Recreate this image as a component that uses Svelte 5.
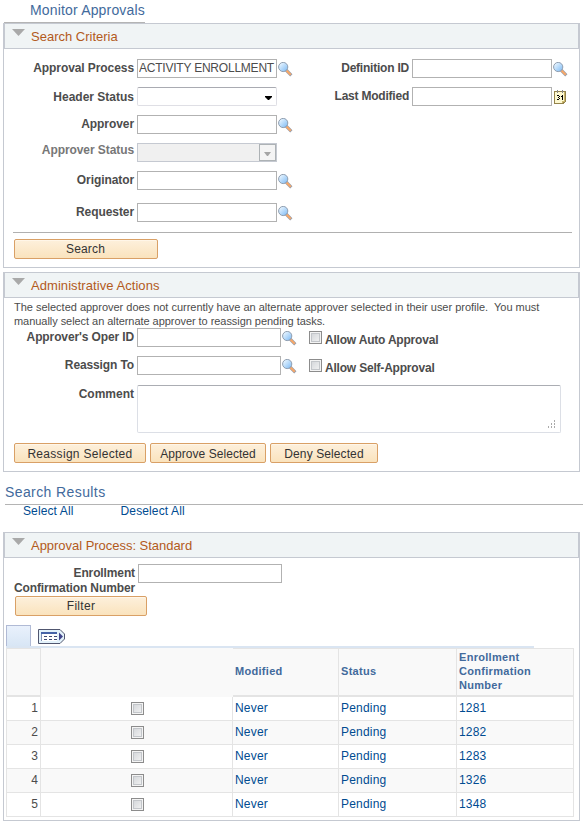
<script lang="ts">
    const searchFields = [
        { label: 'Approval Process', type: 'lookup', value: 'ACTIVITY ENROLLMENT' },
        { label: 'Header Status', type: 'select', value: '' },
        { label: 'Approver', type: 'lookup', value: '' },
        { label: 'Approver Status', type: 'disabled', value: '' },
        { label: 'Originator', type: 'lookup', value: '' },
        { label: 'Requester', type: 'lookup', value: '' }
    ];

    const actions = [
        { label: "Approver's Oper ID", option: 'Allow Auto Approval' },
        { label: 'Reassign To', option: 'Allow Self-Approval' }
    ];

    const rows = [
        { modified: 'Never', status: 'Pending', confirmation: 1281 },
        { modified: 'Never', status: 'Pending', confirmation: 1282 },
        { modified: 'Never', status: 'Pending', confirmation: 1283 },
        { modified: 'Never', status: 'Pending', confirmation: 1326 },
        { modified: 'Never', status: 'Pending', confirmation: 1348 }
    ];
</script>

{#snippet lookup()}
    <svg class="lookup" width="15" height="15" viewBox="0 0 15 15">
        <defs>
            <linearGradient id="lens" x1="0" y1="0" x2="1" y2="1">
                <stop offset="0.1" stop-color="#ecf7ff" />
                <stop offset="0.9" stop-color="#86bff5" />
            </linearGradient>
        </defs>
        <path d="M9 9L12.2 12.2" stroke="#979fae" stroke-width="3.2" stroke-linecap="square" />
        <path d="M9.2 9.2L12 12" stroke="#f8a868" stroke-width="2.1" stroke-linecap="square" />
        <circle cx="5.2" cy="5" r="4.6" fill="url(#lens)" stroke="#8f9eb0" />
    </svg>
{/snippet}

{#snippet header(title: string)}
    <div class="panel-header">
        <svg width="13" height="7" viewBox="0 0 13 7"><path d="M0 0H13L6.5 7Z" fill="#a9a9a9" /></svg>
        <h2>{title}</h2>
    </div>
{/snippet}

<main>
    <h1>Monitor Approvals</h1>

    <section class="panel search-panel">
        {@render header('Search Criteria')}
        <div class="criteria">
            <div class="column">
                {#each searchFields as field}
                    <div class="field" class:muted={field.type === 'disabled'} class:status-field={field.type === 'select'}>
                        <span class="label">{field.label}</span>
                        {#if field.type === 'lookup'}
                            <input type="text" aria-label={field.label} value={field.value} />
                            {@render lookup()}
                        {:else if field.type === 'select'}
                            <div class="select">
                                <svg width="7" height="4" viewBox="0 0 7 4"><path d="M0 0H7V1L4 4H3L0 1Z" fill="#000" /></svg>
                            </div>
                        {:else}
                            <div class="select disabled">
                                <span><svg width="7" height="4" viewBox="0 0 7 4"><path d="M0 0H7L4 4H3Z" fill="#a5a5a5" /></svg></span>
                            </div>
                        {/if}
                    </div>
                {/each}
            </div>
            <div class="column right">
                <div class="field">
                    <span class="label">Definition ID</span>
                    <input type="text" aria-label="Definition ID" />
                    {@render lookup()}
                </div>
                <div class="field last-modified">
                    <span class="label">Last Modified</span>
                    <input type="text" aria-label="Last Modified" />
                    <svg class="calendar" width="12" height="14" viewBox="0 0 12 14" shape-rendering="crispEdges">
                        <path d="M.5 1.5H11.5V11L9 13.5H.5Z" fill="#fdf8d0" stroke="#94834b" />
                        <path d="M10.5 2V11M9 11.5H11M8.5 11V13" fill="none" stroke="#c9b66c" />
                        <path d="M3.5 0V3M8.5 0V3" stroke="#888" />
                        <path d="M3 5.5H5M4 7.5H5M3 9.5H5M5.5 6V7M5.5 8V9M7 6.5H8M8.5 5V10" stroke="#000" />
                    </svg>
                </div>
            </div>
        </div>
        <div class="search-footer">
            <button class="search">Search</button>
        </div>
    </section>

    <section class="panel actions-panel">
        {@render header('Administrative Actions')}
        <p class="note">The selected approver does not currently have an alternate approver selected in their user profile.&nbsp; You must<br /><span>manually select an alternate approver to reassign pending tasks.</span></p>
        {#each actions as action}
            <div class="field action">
                <span class="label">{action.label}</span>
                <input class="wide" type="text" aria-label={action.label} />
                {@render lookup()}
                <span class="check"></span>
                <span class="option">{action.option}</span>
            </div>
        {/each}
        <div class="field comment">
            <span class="label">Comment</span>
            <div class="textarea">
                <svg width="9" height="9" viewBox="0 0 9 9" shape-rendering="crispEdges">
                    <path d="M7 0h1v2h-1zM4 3h1v2h-1zM7 3h1v2h-1zM1 6h1v2h-1zM4 6h1v2h-1zM7 6h1v2h-1z" fill="#aaa" />
                </svg>
            </div>
        </div>
        <div class="buttons">
            <button class="reassign">Reassign Selected</button>
            <button class="approve">Approve Selected</button>
            <button class="deny">Deny Selected</button>
        </div>
    </section>

    <h3>Search Results</h3>
    <div class="links">
        <a href="#select">Select All</a>
        <a href="#deselect">Deselect All</a>
    </div>

    <section class="panel results-panel">
        {@render header('Approval Process: Standard')}
        <div class="filter">
            <span class="label">Enrollment<br />Confirmation Number</span>
            <input class="wide" type="text" aria-label="Enrollment Confirmation Number" />
        </div>
        <button class="filter-button">Filter</button>
        <div class="tabs">
            <span class="tab"></span>
            <svg width="27" height="15" viewBox="0 0 27 15">
                <path d="M.5 .5H22L26.5 5V10L22 14.5H.5Z" fill="#e3f2fb" stroke="#50566f" />
                <path d="M3 3H19V12H3Z" fill="#fff" />
                <path d="M3 3H19V5H3Z" fill="#4564a8" />
                <path d="M3.5 5V12" stroke="#8292b8" />
                <path d="M6 7.5H9M11 7.5H14M16 7.5H19M6 10.5H9M11 10.5H14M16 10.5H19" stroke="#3e4a75" />
                <path d="M21 3.5L25 7.5L21 11.5Z" fill="#42468c" />
            </svg>
        </div>
        <table>
            <thead>
                <tr>
                    <th class="num"></th>
                    <th class="pick"></th>
                    <th class="modified">Modified</th>
                    <th class="status">Status</th>
                    <th>Enrollment<br />Confirmation<br />Number</th>
                </tr>
            </thead>
            <tbody>
                {#each rows as row, i}
                    <tr>
                        <td class="num">{i + 1}</td>
                        <td class="pick"><span class="check"></span></td>
                        <td>{row.modified}</td>
                        <td>{row.status}</td>
                        <td>{row.confirmation}</td>
                    </tr>
                {/each}
            </tbody>
        </table>
    </section>
</main>

<style>
    :global(body) {
        background: #fff;
    }

    main {
        width: 583px;
        height: 825px;
        overflow: hidden;
        font: 12px/14px "Liberation Sans", Arial, sans-serif;
        color: #4c4c4c;
    }

    main :global(*) {
        box-sizing: border-box;
    }

    svg {
        display: block;
        flex: none;
    }

    h1, h2, h3, p {
        margin: 0;
        font-weight: normal;
    }

    h1 {
        width: 141px;
        height: 23px;
        margin-left: 4px;
        padding: 2px 0 0 26px;
        border-bottom: 1px solid #b4b4b4;
        color: #426a9c;
        font-size: 14px;
        line-height: 16px;
        letter-spacing: 0.17px;
        white-space: nowrap;
    }

    .panel {
        width: 577px;
        margin-left: 3px;
        border: 1px solid #c5c9d1;
        border-top: 0;
    }

    .panel-header {
        display: flex;
        height: 26px;
        padding: 5px 0 0 7px;
        border: 1px solid #c5c9d1;
        background: #f0f4f5;
    }

    h2 {
        margin-left: 6px;
        color: #b35a1c;
        font-size: 13px;
        line-height: 15px;
    }

    .actions-panel h2 {
        letter-spacing: 0.06px;
    }

    .search-panel {
        height: 245px;
    }

    .criteria {
        display: flex;
        height: 183px;
        padding-top: 10px;
    }

    .column {
        display: flex;
        flex-direction: column;
        gap: 9px;
        width: 300px;
    }

    .column .field:last-child:not(.last-modified) {
        margin-top: 4px;
    }

    .column.right {
        width: 275px;
    }

    .field {
        display: flex;
        height: 19px;
    }

    .label {
        flex: none;
        width: 130px;
        margin-right: 3px;
        padding-top: 2px;
        font-weight: bold;
        letter-spacing: -0.08px;
        text-align: right;
        white-space: nowrap;
    }

    .right .label {
        width: 105px;
        letter-spacing: -0.22px;
    }

    .status-field .label {
        padding-top: 3px;
        letter-spacing: 0;
    }

    .muted .label {
        padding-top: 0;
        color: #777;
    }

    input {
        flex: none;
        width: 140px;
        height: 19px;
        margin: 0;
        padding: 0 1px 1px;
        border: 1px solid #b2b2b2;
        border-radius: 0;
        background: #fff;
        color: #4c4c4c;
        font: 12px "Liberation Sans", Arial, sans-serif;
        letter-spacing: -0.22px;
    }

    input.wide {
        width: 144px;
    }

    .lookup {
        margin: 3px 0 0 1px;
    }

    .calendar {
        margin: 3px 0 0 2px;
    }

    .select {
        display: flex;
        justify-content: flex-end;
        width: 140px;
        height: 19px;
        padding: 8px 4px 0 0;
        border: 1px solid #dfdfe5;
        border-top-color: #a9abb2;
        border-radius: 2px;
    }

    .select.disabled {
        padding: 0;
        border: 1px solid #c5c9d1;
        border-radius: 0;
        background: #f0f0f0;
    }

    .select span {
        width: 17px;
        height: 17px;
        padding: 7px 0 0 4px;
        border: 1px solid #adb2b5;
        background: #f4f4f4;
    }

    .search-footer {
        width: 559px;
        margin-left: 9px;
        padding: 6px 0 0 1px;
        border-top: 1px solid #b0b0b0;
    }

    button {
        display: block;
        height: 20px;
        margin: 0;
        padding: 0;
        border: 1px solid #d9a066;
        border-radius: 2px;
        background: linear-gradient(#fdf0dc, #fae3bd);
        box-shadow: inset 0 1px #fff6e8;
        color: #333;
        font: 12px "Liberation Sans", Arial, sans-serif;
        letter-spacing: 0.3px;
    }

    .search {
        width: 144px;
        padding-right: 1px;
        letter-spacing: 0.15px;
    }

    .actions-panel {
        height: 200px;
        margin-top: 4px;
    }

    .note {
        height: 30px;
        padding: 2px 0 0 10px;
        font-size: 11px;
        line-height: 14px;
        letter-spacing: -0.01px;
        white-space: nowrap;
    }

    .note span {
        letter-spacing: -0.05px;
    }

    .action {
        margin-bottom: 9px;
    }

    .action .label {
        letter-spacing: -0.12px;
    }

    .check {
        flex: none;
        width: 13px;
        height: 13px;
        border: 1px solid #8c8c8c;
        background: linear-gradient(135deg, #cfd2d6, #f6f6f6);
        box-shadow: inset 0 0 0 1px #f4f4f4, inset 0 0 0 2px #c3c6ca;
    }

    .action .check {
        margin: 3px 3px 0 12px;
    }

    .option {
        padding-top: 5px;
        font-weight: bold;
        letter-spacing: -0.2px;
    }

    .comment {
        height: 48px;
        margin-top: 10px;
    }

    .comment .label {
        letter-spacing: 0;
    }

    .textarea {
        display: flex;
        align-items: flex-end;
        justify-content: flex-end;
        width: 424px;
        height: 48px;
        padding: 0 4px 3px;
        border: 1px solid #dcdfe6;
        border-top-color: #abadb3;
        border-radius: 2px;
    }

    .buttons {
        display: flex;
        gap: 4px;
        margin: 10px 0 0 10px;
    }

    .buttons button {
        padding-top: 1px;
    }

    .reassign {
        width: 132px;
    }

    .approve {
        width: 116px;
        letter-spacing: 0.05px;
    }

    .deny {
        width: 108px;
        letter-spacing: 0.1px;
    }

    h3 {
        height: 33px;
        margin-left: 5px;
        padding-top: 12px;
        border-bottom: 1px solid #b4b4b4;
        color: #426a9c;
        font-size: 14px;
        line-height: 16px;
        letter-spacing: 0.4px;
    }

    .links {
        display: flex;
        gap: 47px;
        height: 27px;
        padding-left: 23px;
    }

    a {
        color: #004b91;
        text-decoration: none;
        line-height: 13px;
        letter-spacing: 0.12px;
    }

    .results-panel {
        height: 289px;
    }

    .results-panel h2 {
        letter-spacing: -0.03px;
    }

    .filter {
        display: flex;
        height: 38px;
        padding-top: 6px;
    }

    .filter .label {
        width: 131px;
        line-height: 15px;
        letter-spacing: -0.12px;
    }

    .filter-button {
        width: 132px;
        margin-left: 11px;
    }

    .tabs {
        display: flex;
        width: 528px;
        height: 23px;
        margin: 9px 0 0 2px;
        border-bottom: 2px solid #dae5f2;
    }

    .tab {
        width: 25px;
        height: 21px;
        margin-right: 7px;
        border: 1px solid #b0bad5;
        border-bottom: 0;
        background: linear-gradient(#e9f1fc, #d8e6f5);
    }

    .tabs svg {
        margin-top: 4px;
    }

    table {
        width: 568px;
        margin-left: 2px;
        border-collapse: separate;
        border-spacing: 0;
        border-left: 1px solid #e4e4e4;
        table-layout: fixed;
    }

    th, td {
        padding: 0 0 2px 2px;
        border-right: 1px solid #e4e4e4;
        border-bottom: 1px solid #e4e4e4;
        text-align: left;
    }

    th {
        height: 49px;
        border-top: 1px solid #e4e4e4;
        border-bottom-width: 2px;
        background: #f9f9f9;
        color: #426a9c;
        font-size: 11px;
        line-height: 14px;
        letter-spacing: 0.3px;
    }

    th.pick {
        border-color: #f9f9f9;
    }

    td {
        height: 24px;
        color: #004b91;
        letter-spacing: 0.2px;
    }

    tbody tr:nth-child(even) td {
        background: #f9f9f9;
    }

    td.num {
        padding-right: 2px;
        color: #4c4c4c;
        text-align: right;
    }

    .num {
        width: 34px;
    }

    .pick {
        width: 192px;
    }

    td .check {
        display: block;
        margin: 1px 0 0 88px;
    }

    .modified {
        width: 106px;
    }

    .status {
        width: 118px;
    }
</style>
